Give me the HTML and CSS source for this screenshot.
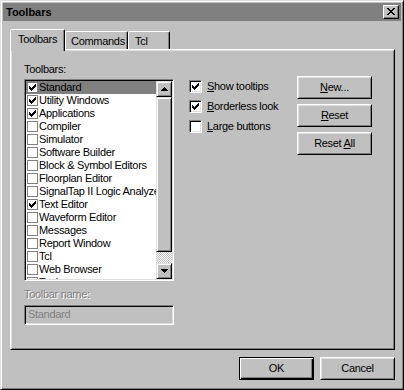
FILE: index.html
```html
<!DOCTYPE html>
<html lang="en">
<head>
    <meta charset="UTF-8">
    <meta name="viewport" content="width=device-width, initial-scale=1.0">
    <title>Toolbars</title>
    <link rel="stylesheet" href="styles.css">
</head>
<body>
    <svg class="defs" width="0" height="0" aria-hidden="true">
        <symbol id="check" viewBox="0 0 7 7">
            <path d="M6 0h1v1H6z M5 1h2v1H5z M0 2h1v1H0z M4 2h3v1H4z M0 3h2v1H0z M3 3h3v1H3z M0 4h5v1H0z M1 5h3v1H1z M2 6h1v1H2z"/>
        </symbol>
        <symbol id="arrow-up" viewBox="0 0 7 4">
            <path d="M3 0h1v1H3z M2 1h3v1H2z M1 2h5v1H1z M0 3h7v1H0z"/>
        </symbol>
        <symbol id="arrow-down" viewBox="0 0 7 4">
            <path d="M0 0h7v1H0z M1 1h5v1H1z M2 2h3v1H2z M3 3h1v1H3z"/>
        </symbol>
    </svg>

    <div class="window">
        <div class="titlebar">
            <span class="title">Toolbars</span>
            <button type="button" class="close-btn" aria-label="Close">
                <svg width="8" height="7" viewBox="0 0 8 7">
                    <path d="M0 0h2v1H0z M6 0h2v1H6z M1 1h2v1H1z M5 1h2v1H5z M2 2h4v1H2z M3 3h2v1H3z M2 4h4v1H2z M1 5h2v1H1z M5 5h2v1H5z M0 6h2v1H0z M6 6h2v1H6z"/>
                </svg>
            </button>
        </div>

        <div class="tabs">
            <div class="tab active">Toolbars</div>
            <div class="tab tab-commands">Commands</div>
            <div class="tab tab-tcl">Tcl</div>
        </div>

        <div class="panel">
            <div class="left-col">
                <div class="label">Toolbars:</div>
                <div class="listbox">
                    <ul class="items">
                        <li class="item selected"><span class="box"><svg><use href="#check"/></svg></span>Standard</li>
                        <li class="item"><span class="box"><svg><use href="#check"/></svg></span>Utility Windows</li>
                        <li class="item"><span class="box"><svg><use href="#check"/></svg></span>Applications</li>
                        <li class="item"><span class="box"></span>Compiler</li>
                        <li class="item"><span class="box"></span>Simulator</li>
                        <li class="item"><span class="box"></span>Software Builder</li>
                        <li class="item"><span class="box"></span>Block &amp; Symbol Editors</li>
                        <li class="item"><span class="box"></span>Floorplan Editor</li>
                        <li class="item"><span class="box"></span>SignalTap II Logic Analyzer</li>
                        <li class="item"><span class="box"><svg><use href="#check"/></svg></span>Text Editor</li>
                        <li class="item"><span class="box"></span>Waveform Editor</li>
                        <li class="item"><span class="box"></span>Messages</li>
                        <li class="item"><span class="box"></span>Report Window</li>
                        <li class="item"><span class="box"></span>Tcl</li>
                        <li class="item"><span class="box"></span>Web Browser</li>
                        <li class="item"><span class="box"></span>Tools</li>
                    </ul>
                    <div class="scrollbar">
                        <div class="scroll-btn"><svg width="7" height="4"><use href="#arrow-up"/></svg></div>
                        <div class="scroll-thumb"></div>
                        <div class="scroll-track"></div>
                        <div class="scroll-btn"><svg width="7" height="4"><use href="#arrow-down"/></svg></div>
                    </div>
                </div>
                <div class="label disabled name-label">Toolbar name:</div>
                <div class="textbox">Standard</div>
            </div>

            <div class="options">
                <label class="option">
                    <span class="checkbox"><svg width="7" height="7"><use href="#check"/></svg></span>
                    <span><u>S</u>how tooltips</span>
                </label>
                <label class="option">
                    <span class="checkbox"><svg width="7" height="7"><use href="#check"/></svg></span>
                    <span><u>B</u>orderless look</span>
                </label>
                <label class="option">
                    <span class="checkbox"></span>
                    <span><u>L</u>arge buttons</span>
                </label>
            </div>

            <div class="actions">
                <button type="button" class="btn"><u>N</u>ew...</button>
                <button type="button" class="btn"><u>R</u>eset</button>
                <button type="button" class="btn">Reset <u>A</u>ll</button>
            </div>
        </div>

        <div class="footer">
            <button type="button" class="btn default">OK</button>
            <button type="button" class="btn">Cancel</button>
        </div>
    </div>
</body>
</html>
```

FILE: styles.css
```css
:root {
    --face: #c0c0c0;
    --light: #dfdfdf;
    --shadow: #808080;
    --dark: #000000;
    --highlight: #ffffff;
}

* {
    margin: 0;
    padding: 0;
    box-sizing: border-box;
}

body {
    font-family: "Liberation Sans", Arial, sans-serif;
    font-size: 11px;
    line-height: 13px;
    letter-spacing: -0.3px;
    color: #000;
    background: var(--face);
}

.defs {
    position: absolute;
}

.window {
    width: 404px;
    height: 390px;
    padding: 2px;
    background: var(--face);
    border: 1px solid;
    border-color: var(--light) var(--dark) var(--dark) var(--light);
    box-shadow: inset 1px 1px var(--highlight), inset -1px -1px var(--shadow);
}

/* title bar */
.titlebar {
    height: 18px;
    background: var(--shadow);
    display: flex;
    align-items: center;
    justify-content: space-between;
    padding: 0 2px 0 3px;
}

.title {
    font-weight: 700;
    letter-spacing: 0;
    color: #000;
}

.close-btn {
    width: 16px;
    height: 14px;
    display: flex;
    align-items: center;
    justify-content: center;
    background: var(--face);
    border: 1px solid;
    border-color: var(--highlight) var(--dark) var(--dark) var(--highlight);
    box-shadow: inset -1px -1px var(--shadow);
    padding: 0 1px 1px 0;
}

.close-btn svg {
    display: block;
    fill: #000;
}

/* tabs */
.tabs {
    display: flex;
    height: 18px;
    margin: 10px 0 0 7px;
}

.tab {
    height: 18px;
    padding: 3px 0 0 5px;
    background: var(--face);
    border: 1px solid;
    border-bottom: none;
    border-color: var(--highlight) var(--dark) transparent var(--highlight);
    border-radius: 2px 2px 0 0;
    box-shadow: inset -1px 0 var(--shadow);
    white-space: nowrap;
    overflow: hidden;
}

.tab.active {
    width: 55px;
    height: 22px;
    margin-top: -2px;
    padding-left: 7px;
    position: relative;
    z-index: 1;
}

.tab-commands {
    width: 63px;
}

.tab-tcl {
    width: 42px;
    padding-left: 6px;
}

/* panel */
.panel {
    display: flex;
    align-items: flex-start;
    height: 301px;
    margin: 0 6px 0 7px;
    padding: 13px 0 0 13px;
    border: 1px solid;
    border-color: var(--highlight) var(--dark) var(--dark) var(--highlight);
    box-shadow: inset 1px 1px var(--light), inset -1px -1px var(--shadow);
}

.left-col {
    width: 150px;
}

.label.disabled {
    color: var(--shadow);
    text-shadow: 1px 1px var(--highlight);
}

.listbox {
    display: flex;
    width: 150px;
    height: 202px;
    margin-top: 3px;
    padding: 1px;
    background: #fff;
    border: 1px solid;
    border-color: var(--shadow) var(--highlight) var(--highlight) var(--shadow);
    box-shadow: inset 1px 1px var(--dark), inset -1px -1px var(--light);
}

.items {
    list-style: none;
    flex: 1;
    overflow: hidden;
    background: #fff;
}

.item {
    display: flex;
    align-items: center;
    height: 13px;
    padding-left: 1px;
    white-space: nowrap;
}

.item.selected {
    background: var(--shadow);
}

.item .box {
    flex: none;
    width: 11px;
    height: 11px;
    margin-right: 1px;
    background: #fff;
    border: 1px solid var(--shadow);
    display: flex;
    align-items: center;
    justify-content: center;
}

.item .box svg {
    width: 7px;
    height: 7px;
    fill: #000;
}

.scrollbar {
    width: 16px;
    display: flex;
    flex-direction: column;
}

.scroll-btn,
.scroll-thumb {
    background: var(--face);
    border: 1px solid;
    border-color: var(--light) var(--dark) var(--dark) var(--light);
    box-shadow: inset 1px 1px var(--highlight), inset -1px -1px var(--shadow);
}

.scroll-btn {
    height: 16px;
    display: flex;
    align-items: center;
    justify-content: center;
}

.scroll-btn svg {
    display: block;
    fill: #000;
}

.scroll-thumb {
    height: 155px;
}

.scroll-track {
    flex: 1;
    background: repeating-conic-gradient(#fff 0 25%, var(--face) 0 50%) 0 0 / 2px 2px;
}

.name-label {
    margin-top: 7px;
}

.textbox {
    height: 20px;
    margin-top: 4px;
    padding: 2px 3px;
    color: var(--shadow);
    background: var(--face);
    border: 1px solid;
    border-color: var(--shadow) var(--highlight) var(--highlight) var(--shadow);
    box-shadow: inset 1px 1px var(--dark), inset -1px -1px var(--light);
}

/* options */
.options {
    flex: 1;
    display: flex;
    flex-direction: column;
    gap: 7px;
    margin: 17px 0 0 15px;
}

.option {
    display: flex;
    align-items: center;
    gap: 5px;
    height: 13px;
}

.checkbox {
    width: 13px;
    height: 13px;
    display: flex;
    align-items: center;
    justify-content: center;
    background: #fff;
    border: 1px solid;
    border-color: var(--shadow) var(--highlight) var(--highlight) var(--shadow);
    box-shadow: inset 1px 1px var(--dark), inset -1px -1px var(--light);
}

.checkbox svg {
    display: block;
    fill: #000;
}

/* buttons */
.actions {
    width: 75px;
    display: flex;
    flex-direction: column;
    gap: 5px;
    margin: 13px 22px 0 0;
}

.btn {
    width: 75px;
    height: 23px;
    font: inherit;
    letter-spacing: inherit;
    color: #000;
    background: var(--face);
    border: 1px solid;
    border-color: var(--highlight) var(--dark) var(--dark) var(--highlight);
    box-shadow: inset 1px 1px var(--light), inset -1px -1px var(--shadow);
}

.btn.default {
    border-color: var(--dark);
    box-shadow: inset 1px 1px var(--highlight), inset -1px -1px var(--dark), inset -2px -2px var(--shadow);
}

.footer {
    display: flex;
    justify-content: flex-end;
    gap: 6px;
    margin: 7px 6px 0 0;
}
```
